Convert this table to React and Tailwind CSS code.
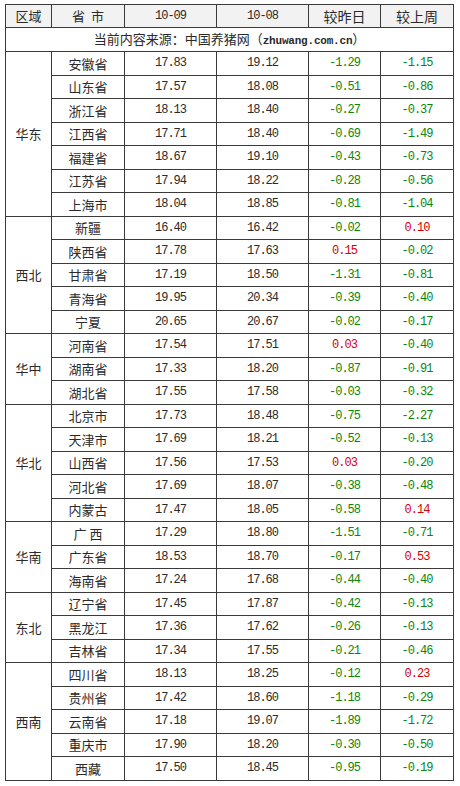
import React from 'react';

const groups = [
  {
    region: '华东',
    rows: [
      ['安徽省', '17.83', '19.12', '-1.29', '-1.15'],
      ['山东省', '17.57', '18.08', '-0.51', '-0.86'],
      ['浙江省', '18.13', '18.40', '-0.27', '-0.37'],
      ['江西省', '17.71', '18.40', '-0.69', '-1.49'],
      ['福建省', '18.67', '19.10', '-0.43', '-0.73'],
      ['江苏省', '17.94', '18.22', '-0.28', '-0.56'],
      ['上海市', '18.04', '18.85', '-0.81', '-1.04'],
    ],
  },
  {
    region: '西北',
    rows: [
      ['新疆', '16.40', '16.42', '-0.02', '0.10'],
      ['陕西省', '17.78', '17.63', '0.15', '-0.02'],
      ['甘肃省', '17.19', '18.50', '-1.31', '-0.81'],
      ['青海省', '19.95', '20.34', '-0.39', '-0.40'],
      ['宁夏', '20.65', '20.67', '-0.02', '-0.17'],
    ],
  },
  {
    region: '华中',
    rows: [
      ['河南省', '17.54', '17.51', '0.03', '-0.40'],
      ['湖南省', '17.33', '18.20', '-0.87', '-0.91'],
      ['湖北省', '17.55', '17.58', '-0.03', '-0.32'],
    ],
  },
  {
    region: '华北',
    rows: [
      ['北京市', '17.73', '18.48', '-0.75', '-2.27'],
      ['天津市', '17.69', '18.21', '-0.52', '-0.13'],
      ['山西省', '17.56', '17.53', '0.03', '-0.20'],
      ['河北省', '17.69', '18.07', '-0.38', '-0.48'],
      ['内蒙古', '17.47', '18.05', '-0.58', '0.14'],
    ],
  },
  {
    region: '华南',
    rows: [
      ['广\u00a0西', '17.29', '18.80', '-1.51', '-0.71'],
      ['广东省', '18.53', '18.70', '-0.17', '0.53'],
      ['海南省', '17.24', '17.68', '-0.44', '-0.40'],
    ],
  },
  {
    region: '东北',
    rows: [
      ['辽宁省', '17.45', '17.87', '-0.42', '-0.13'],
      ['黑龙江', '17.36', '17.62', '-0.26', '-0.13'],
      ['吉林省', '17.34', '17.55', '-0.21', '-0.46'],
    ],
  },
  {
    region: '西南',
    rows: [
      ['四川省', '18.13', '18.25', '-0.12', '0.23'],
      ['贵州省', '17.42', '18.60', '-1.18', '-0.29'],
      ['云南省', '17.18', '19.07', '-1.89', '-1.72'],
      ['重庆市', '17.90', '18.20', '-0.30', '-0.50'],
      ['西藏', '17.50', '18.45', '-0.95', '-0.19'],
    ],
  },
];

const cell = 'border border-[#3a3a3a] text-center p-0';
const num = "font-['Liberation_Mono',monospace] text-[12px] tracking-[-1px]";

function Change({ value }) {
  const up = !value.startsWith('-');
  return (
    <td className={`${cell} ${num} ${up ? 'text-[#d40000]' : 'text-[#0b860b]'}`}>{value}</td>
  );
}

export default function App() {
  return (
    <div className="bg-white w-[460px] h-[786px] pt-[4px] pl-[5px] font-['Noto_Sans_CJK_SC',sans-serif] text-[12px] text-[#2a2a2a]">
      <table className="table-fixed border-collapse w-[448px]">
        <colgroup>
          <col className="w-[46px]" />
          <col className="w-[73px]" />
          <col className="w-[92px]" />
          <col className="w-[92px]" />
          <col className="w-[72px]" />
          <col className="w-[73px]" />
        </colgroup>
        <thead>
          <tr className="h-[23px] bg-[#f2f2f2]">
            <th className={`${cell} font-normal text-[13px]`}>区域</th>
            <th className={`${cell} font-normal text-[13px]`}>省&nbsp;&nbsp;市</th>
            <th className={`${cell} ${num} font-normal`}>10-09</th>
            <th className={`${cell} ${num} font-normal`}>10-08</th>
            <th className={`${cell} font-normal text-[14px]`}>较昨日</th>
            <th className={`${cell} font-normal text-[14px]`}>较上周</th>
          </tr>
        </thead>
        <tbody>
          <tr className="h-[24px]">
            <td colSpan={6} className={`${cell} text-[13px]`}>
              当前内容来源：中国养猪网（
              <span className="font-['Liberation_Mono',monospace] font-bold text-[11px] tracking-[-0.2px]">zhuwang.com.cn</span>
              ）
            </td>
          </tr>
          {groups.map((g) =>
            g.rows.map((r, i) => (
              <tr key={g.region + r[0]} className="h-[23.5px]">
                {i === 0 && (
                  <td rowSpan={g.rows.length} className={`${cell} text-[13px]`}>
                    {g.region}
                  </td>
                )}
                <td className={`${cell} text-[13px]`}>{r[0]}</td>
                <td className={`${cell} ${num}`}>{r[1]}</td>
                <td className={`${cell} ${num}`}>{r[2]}</td>
                <Change value={r[3]} />
                <Change value={r[4]} />
              </tr>
            ))
          )}
        </tbody>
      </table>
    </div>
  );
}
